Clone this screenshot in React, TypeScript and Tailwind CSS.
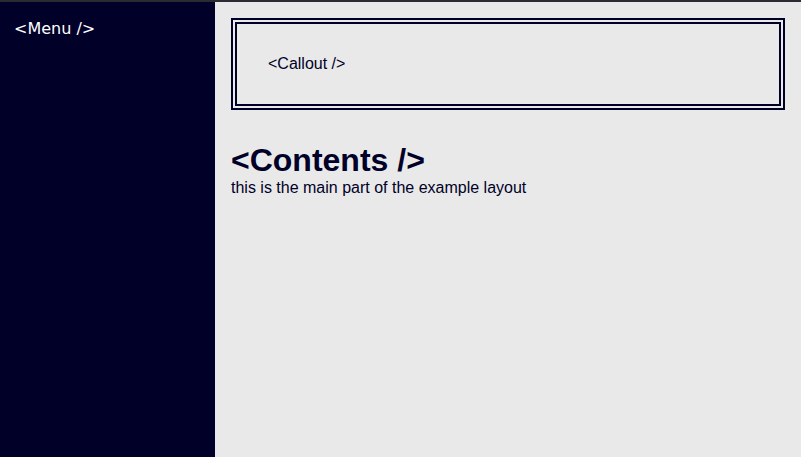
import React from 'react';

const Menu: React.FC = () => {
    return (
        <nav className="w-[215px] shrink-0 bg-[#000028] pl-[14px] pt-[17px]">
            <div className="text-white text-base leading-[19px] font-['DejaVu_Sans',sans-serif]">
                &lt;Menu /&gt;
            </div>
        </nav>
    );
};

const Callout: React.FC = () => {
    return (
        <div className="border-[6px] border-double border-[#000028] pl-[31px] pt-[31px] pb-[31px] text-base leading-[18px] text-[#000028]">
            &lt;Callout /&gt;
        </div>
    );
};

const Contents: React.FC = () => {
    return (
        <div className="mt-[32px] text-[#000028]">
            <h1 className="text-[32px] font-bold leading-[37px]">&lt;Contents /&gt;</h1>
            <p className="text-base leading-[18px]">this is the main part of the example layout</p>
        </div>
    );
};

export default function App() {
    return (
        <div className="w-[801px] h-[457px] flex flex-col font-['Liberation_Sans',Arial,sans-serif] overflow-hidden">
            <div className="h-[2px] shrink-0 bg-[#2b2b33]" />
            <div className="flex flex-1">
                <Menu />
                <main className="flex-1 bg-[#e9e9e9] p-4">
                    <Callout />
                    <Contents />
                </main>
            </div>
        </div>
    );
}
